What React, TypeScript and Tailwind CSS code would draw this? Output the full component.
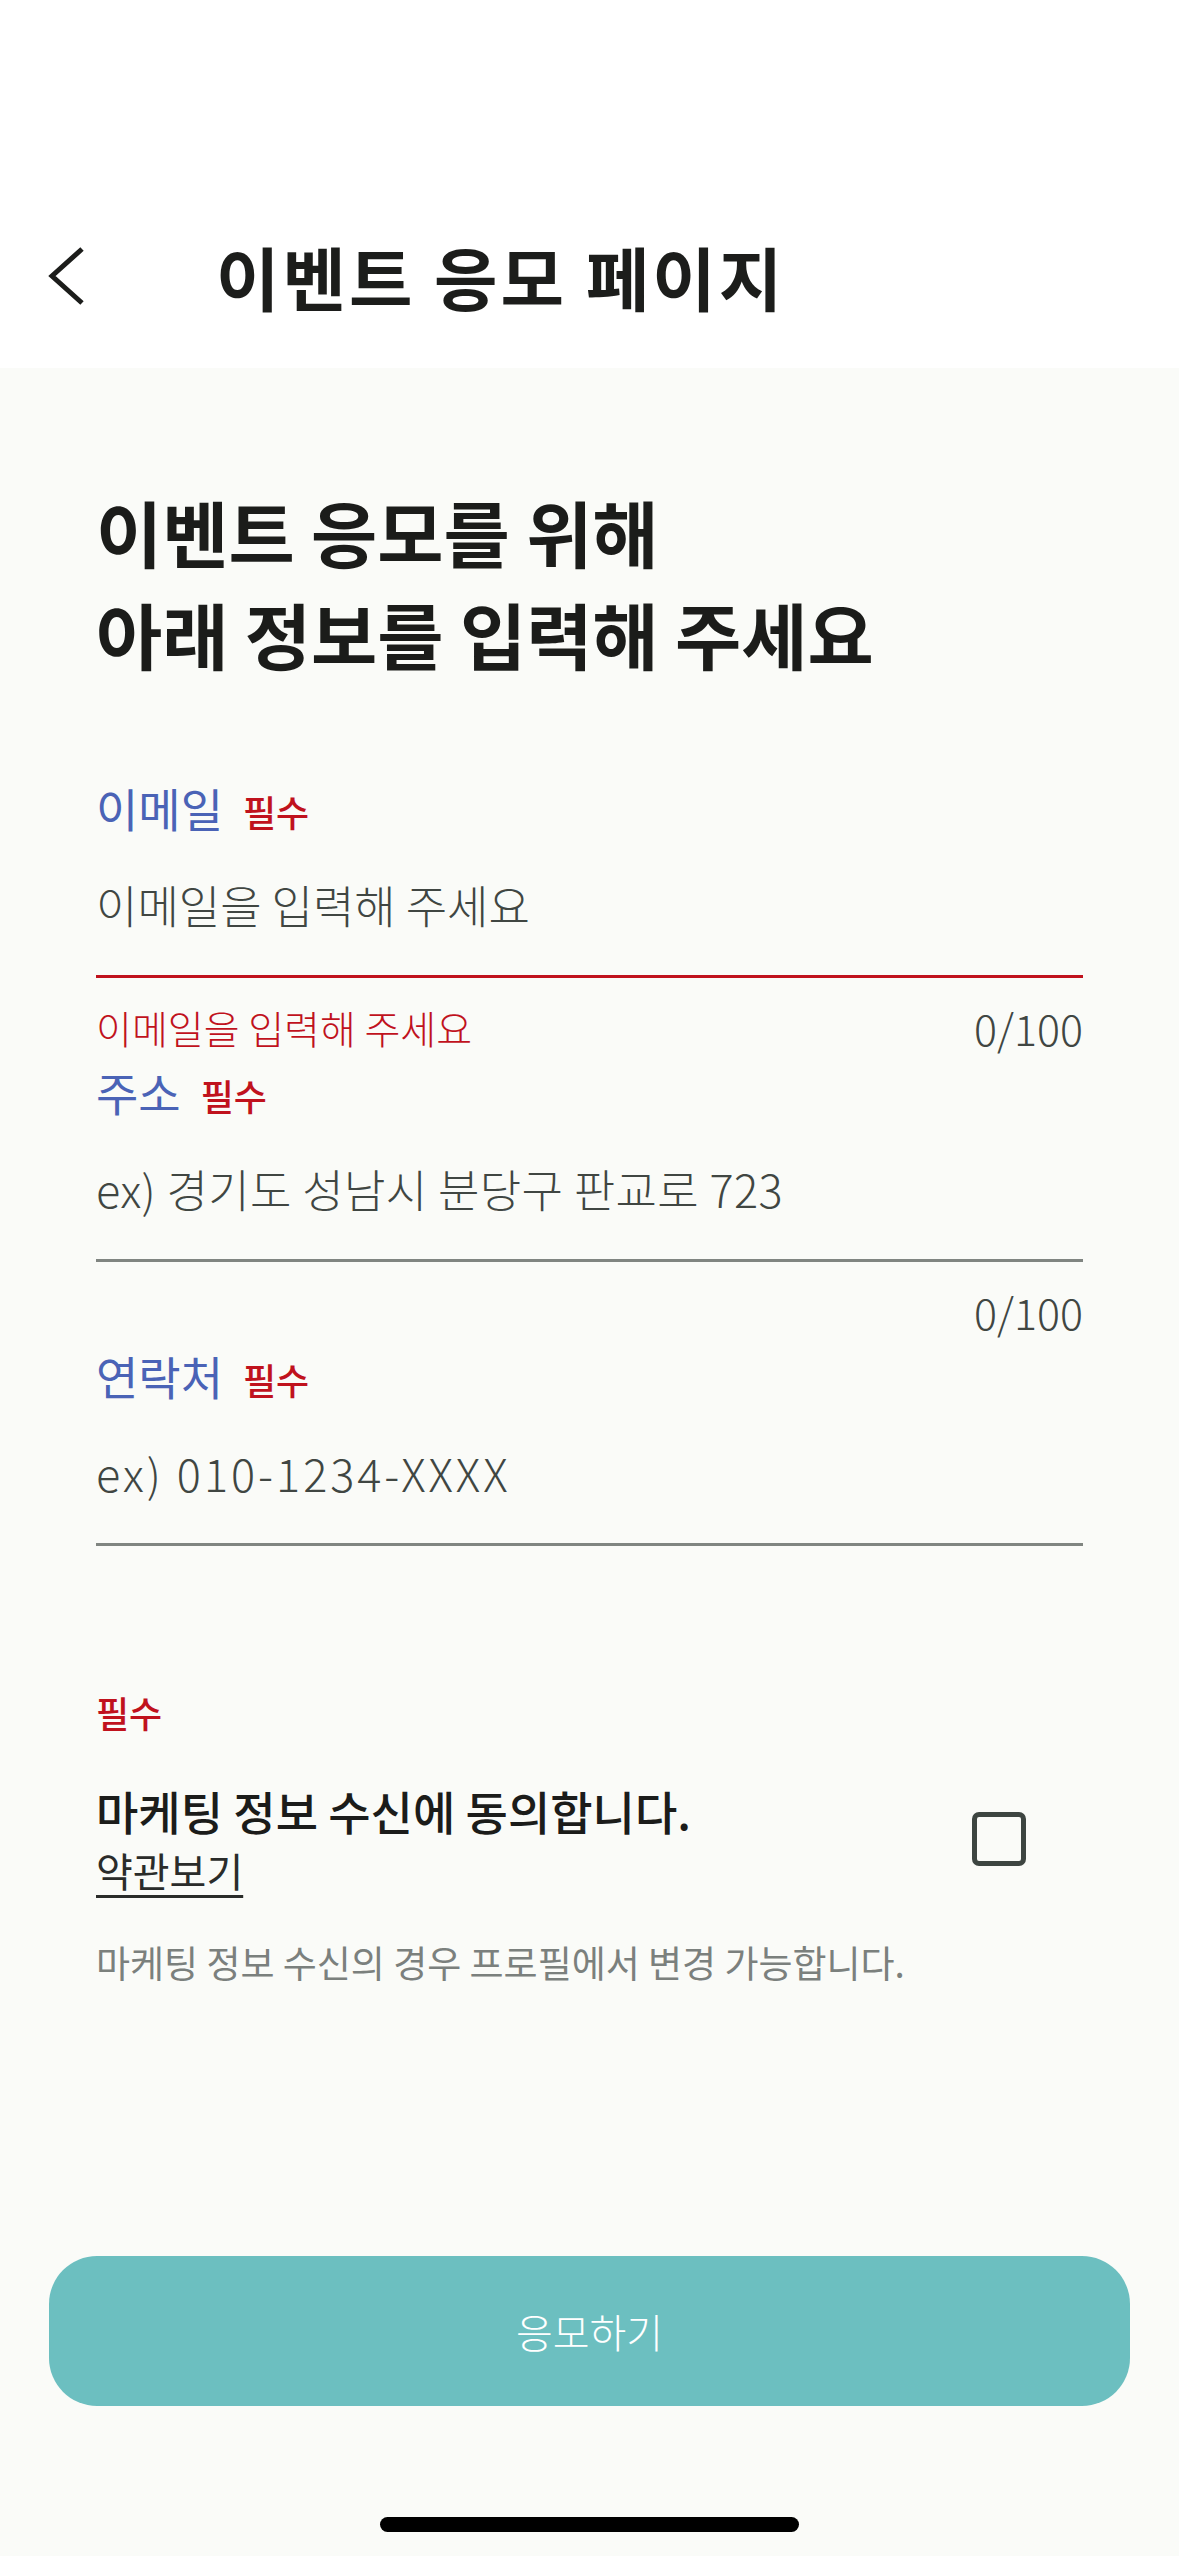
import React from "react";

const font = { fontFamily: '"Noto Sans CJK KR", "Noto Sans", sans-serif' };

type FieldProps = {
  label: string;
  placeholder: string;
  error?: string;
  counter?: boolean;
  inputClass?: string;
};

const Field = ({ label, placeholder, error, counter = true, inputClass = "" }: FieldProps) => {
  return (
    <div className="flex flex-col">
      <div className="h-[64px] flex items-baseline gap-[20px] pt-[4px]">
        <span className="text-[46px] leading-[54px] text-[#4a63b6]">{label}</span>
        <span className="text-[36px] leading-[40px] font-medium text-[#c0121d]">필수</span>
      </div>
      <div className="h-[135px] pb-[5px] flex items-center">
        <span className={"text-[45px] font-light text-[#404642] " + inputClass}>{placeholder}</span>
      </div>
      <div className={error ? "h-[3px] bg-[#c0121d]" : "h-[3px] bg-[#808581]"}></div>
      {counter && (
        <div className="pt-[31px] h-[67px] flex justify-between items-center">
          <span className="text-[39px] leading-[36px] font-light text-[#c0121d]">{error}</span>
          <span className="text-[43px] leading-[36px] font-light text-[#404642]">0/100</span>
        </div>
      )}
    </div>
  );
};

export default function App() {
  return (
    <div className="min-h-[2556px] w-[1179px] flex flex-col bg-[#fafbf8]" style={font}>
      {/* header */}
      <div className="h-[368px] bg-white pt-[237px]">
        <div className="h-[80px] flex items-center">
          <svg className="ml-[46px] w-[40px] h-[64px]" viewBox="0 0 40 64" fill="none">
            <polyline points="36,4 6,31 36,58" stroke="#1c1d1b" strokeWidth="5" strokeLinecap="butt" strokeLinejoin="miter" />
          </svg>
          <h1 className="ml-[130px] text-[69px] font-bold tracking-[3px] text-[#1c1d1b]">이벤트 응모 페이지</h1>
        </div>
      </div>

      {/* body */}
      <div className="flex-1 flex flex-col px-[96px]">
        <h2 className="mt-[112px] text-[72px] leading-[102px] font-bold text-[#1b1c1a]">
          이벤트 응모를 위해
          <br />
          아래 정보를 입력해 주세요
        </h2>

        <div className="mt-[92px] flex flex-col gap-[15px]">
          <Field label="이메일" placeholder="이메일을 입력해 주세요" error="이메일을 입력해 주세요" />
          <Field label="주소" placeholder="ex) 경기도 성남시 분당구 판교로 723" inputClass="tracking-[0.4px]" />
          <Field label="연락처" placeholder="ex) 010-1234-XXXX" counter={false} inputClass="tracking-[3px]" />
        </div>

        {/* marketing agreement */}
        <div className="mt-[146px] text-[36px] leading-[40px] font-medium text-[#c0121d]">필수</div>
        <div className="mt-[52px] flex items-center justify-between">
          <div className="flex flex-col">
            <span className="text-[46px] leading-[52px] font-medium text-[#1b1c1a]">마케팅 정보 수신에 동의합니다.</span>
            <span className="mt-[10px] text-[40px] leading-[48px] text-[#2a2c2a] underline underline-offset-[8px] decoration-[3px]">
              약관보기
            </span>
          </div>
          <div className="mr-[57px] w-[54px] h-[54px] rounded-[7px] border-[5px] border-[#3d4541]"></div>
        </div>
        <p className="mt-[46px] text-[37px] leading-[44px] text-[#7b807d]">
          마케팅 정보 수신의 경우 프로필에서 변경 가능합니다.
        </p>

        <div className="flex-1"></div>
      </div>

      {/* submit */}
      <div className="px-[49px]">
        <button className="w-full h-[150px] rounded-[48px] bg-[#6cbfc0] text-white text-[40px] font-light">
          응모하기
        </button>
      </div>
      <div className="h-[150px] flex justify-center pt-[111px]">
        <div className="w-[419px] h-[15px] rounded-full bg-black"></div>
      </div>
    </div>
  );
}
